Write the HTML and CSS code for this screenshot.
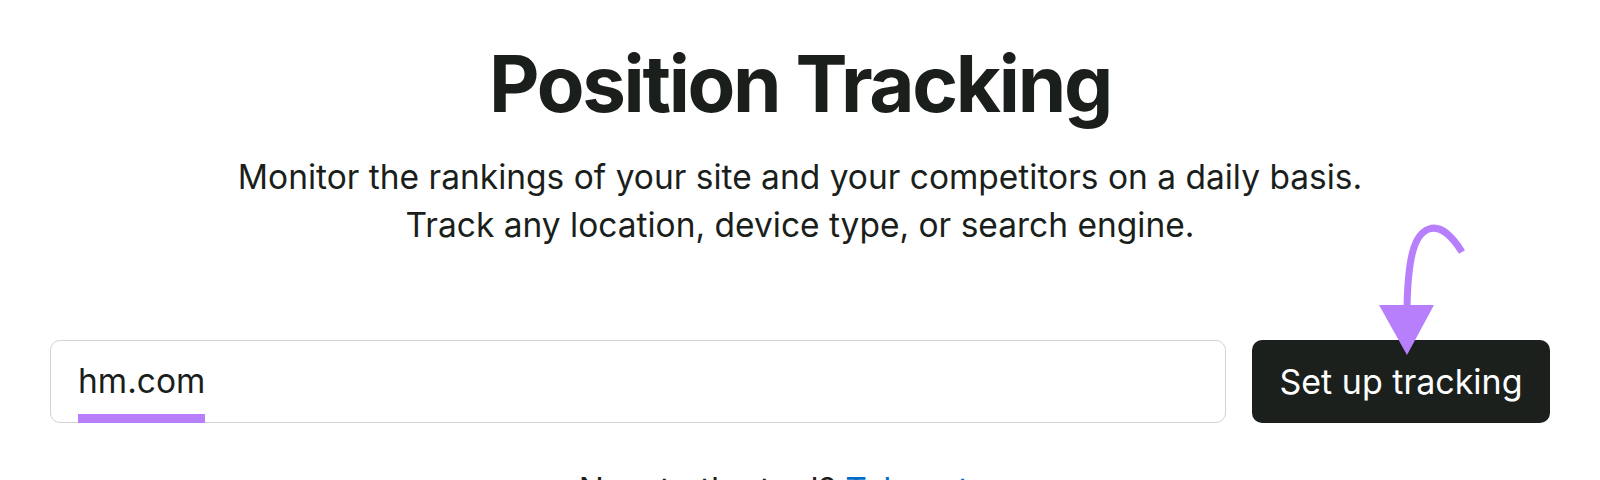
FILE: index.html
```
<!DOCTYPE html>
<html lang="en">
<head>
    <meta charset="UTF-8">
    <meta name="viewport" content="width=device-width, initial-scale=1.0">
    <title>Position Tracking</title>
    <link rel="stylesheet" href="styles.css">
</head>
<body>
    <div class="container">
        <h1 class="title">Position Tracking</h1>
        <p class="subtitle">
            Monitor the rankings of your site and your competitors on a daily basis.<br>
            Track any location, device type, or search engine.
        </p>
        <div class="setup-row">
            <div class="domain-field">
                <span class="domain-value">hm.com</span>
            </div>
            <div class="action">
                <button class="setup-button">Set up tracking</button>
                <svg class="pointer-arrow" width="95" height="137" viewBox="0 0 95 137">
                    <path d="M88 32 C 78 16, 66 5, 55 9 C 40 14, 34 38, 33 88" fill="none" stroke="#b77ffb" stroke-width="7"/>
                    <polygon points="5,85 60,85 33,135" fill="#b77ffb"/>
                </svg>
            </div>
        </div>
        <p class="hint">New to the tool? <a href="#">Take a tour</a></p>
    </div>
</body>
</html>
```

FILE: styles.css
```
body {
    margin: 0;
    background: #fff;
    color: #1b1f1c;
    font-family: Inter, "Noto Sans", sans-serif;
}
.container {
    padding-top: 37px;
}
.title {
    margin: 0;
    text-align: center;
    font-size: 78px;
    line-height: 1.2;
    font-weight: 700;
    letter-spacing: -2.3px;
}
.subtitle {
    margin: 22px 0 0;
    text-align: center;
    font-size: 33.5px;
    line-height: 48px;
}
.setup-row {
    display: flex;
    gap: 26px;
    margin-top: 91px;
    padding: 0 50px 0 50px;
}
.domain-field {
    flex: 1;
    height: 83px;
    box-sizing: border-box;
    border: 1px solid #d3d3d3;
    border-radius: 10px;
    padding: 0 27px;
    display: flex;
    align-items: center;
    font-size: 33.5px;
}
.domain-value {
    position: relative;
}
.domain-value::after {
    content: "";
    position: absolute;
    left: 0;
    right: 0;
    bottom: -22px;
    height: 9px;
    background: #b77ffb;
}
.action {
    position: relative;
}
.setup-button {
    height: 83px;
    width: 298px;
    border: none;
    border-radius: 10px;
    background: #1c201d;
    color: #fff;
    font-family: inherit;
    font-size: 34px;
    cursor: pointer;
}
.pointer-arrow {
    position: absolute;
    left: 122px;
    top: -120px;
}
.hint {
    margin: 43px 0 0;
    text-align: center;
    font-size: 33.5px;
    line-height: 48px;
}
.hint a {
    color: #006dca;
    text-decoration: none;
}
```
